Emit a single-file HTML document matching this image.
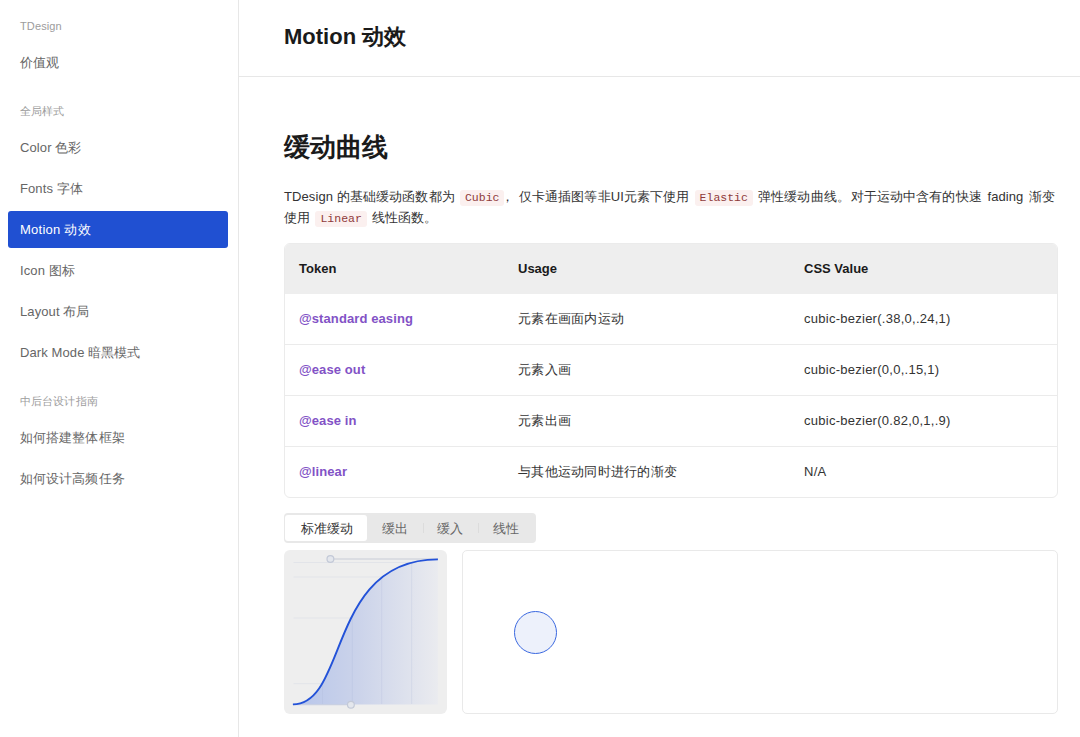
<!DOCTYPE html>
<html>
<head>
<meta charset="utf-8">
<style>
*{box-sizing:border-box;margin:0;padding:0}
html,body{width:1080px;height:737px;overflow:hidden;background:#fff}
body{font-family:"Liberation Sans",sans-serif;color:#222;position:relative}
.abs{position:absolute;white-space:nowrap}
#side{position:absolute;left:0;top:0;width:239px;height:737px;border-right:1px solid #e7e7e7}
.gt{position:absolute;left:20px;font-size:11px;color:#9c9c9c;line-height:14px;letter-spacing:0.12px}
.it{position:absolute;left:20px;font-size:13px;color:#666;line-height:16px;letter-spacing:0.1px}
.act{position:absolute;left:8px;top:211px;width:220px;height:37px;background:#2050d2;border-radius:3px}
.act span{position:absolute;left:12px;top:11px;font-size:13px;color:#fff;line-height:16px;letter-spacing:0.25px}
#hdr{position:absolute;left:239px;top:0;width:841px;height:77px;border-bottom:1px solid #e7e7e7}
#hdr .t{position:absolute;left:45px;top:24px;font-size:22px;font-weight:bold;color:#1a1a1a;line-height:26px}
h2{position:absolute;left:284px;top:132px;font-size:26px;font-weight:bold;color:#1a1a1a;line-height:30px}
.p{position:absolute;left:284px;font-size:13px;color:#333;line-height:16px;white-space:nowrap;letter-spacing:0.1px}
code{font-family:"Liberation Mono",monospace;font-size:11.5px;color:#8f3a3a;background:#fbf0ef;border-radius:3px;padding:1px 5px 2px;margin:0 1.5px;letter-spacing:0}
#tbl{position:absolute;left:284px;top:243px;width:774px;height:255px;border:1px solid #ebebeb;border-radius:6px;overflow:hidden}
.th{position:absolute;left:0;top:0;width:100%;height:50px;background:#eee}
.row{position:absolute;left:0;width:100%;height:51px;border-top:1px solid #ebebeb}
.c{position:absolute;font-size:13px;line-height:16px;white-space:nowrap}
.hd{font-weight:bold;color:#1a1a1a}
.tk{font-weight:bold;color:#8252c6;letter-spacing:0.1px}
.us{color:#333;letter-spacing:0.26px}
#tabs{position:absolute;left:284px;top:513px;width:252px;height:30px;background:#e8e8e8;border-radius:4px}
.tab{position:absolute;top:9px;font-size:13px;color:#666;line-height:14px}
.tabact{position:absolute;left:1px;top:2px;width:82px;height:26px;background:#fff;border-radius:3px}
.sep{position:absolute;top:10px;width:1px;height:10px;background:#dcdcdc}
#curve{position:absolute;left:284px;top:550px;width:163px;height:164px;background:#eee;border-radius:6px}
#anim{position:absolute;left:462px;top:550px;width:596px;height:164px;border:1px solid #e9e9e9;border-radius:5px}
</style>
</head>
<body>
<div id="side">
  <div class="gt" style="top:19px">TDesign</div>
  <div class="it" style="top:55px">价值观</div>
  <div class="gt" style="top:104px">全局样式</div>
  <div class="it" style="top:140px">Color 色彩</div>
  <div class="it" style="top:181px">Fonts 字体</div>
  <div class="act"><span>Motion 动效</span></div>
  <div class="it" style="top:263px">Icon 图标</div>
  <div class="it" style="top:304px">Layout 布局</div>
  <div class="it" style="top:345px">Dark Mode 暗黑模式</div>
  <div class="gt" style="top:394px">中后台设计指南</div>
  <div class="it" style="top:430px">如何搭建整体框架</div>
  <div class="it" style="top:471px">如何设计高频任务</div>
</div>
<div id="hdr"><div class="t">Motion 动效</div></div>
<h2>缓动曲线</h2>
<div class="p" style="top:189px">TDesign 的基础缓动函数都为 <code>Cubic</code><span style="display:inline-block;width:13px;text-indent:-5px;letter-spacing:0">，</span>仅卡通插图等非UI元素下使用 <code>Elastic</code> 弹性缓动曲线<span style="display:inline-block;width:14px;letter-spacing:0">。</span>对于运动中含有的快速<span style="word-spacing:2px"> fading </span>渐变</div>
<div class="p" style="top:210px">使用 <code>Linear</code> 线性函数。</div>

<div id="tbl">
  <div class="th">
    <div class="c hd" style="left:14px;top:17px">Token</div>
    <div class="c hd" style="left:233px;top:17px">Usage</div>
    <div class="c hd" style="left:519px;top:17px">CSS Value</div>
  </div>
  <div class="row" style="top:49px;border-top-color:transparent">
    <div class="c tk" style="left:14px;top:17px">@standard easing</div>
    <div class="c us" style="left:233px;top:17px">元素在画面内运动</div>
    <div class="c us" style="left:519px;top:17px">cubic-bezier(.38,0,.24,1)</div>
  </div>
  <div class="row" style="top:100px">
    <div class="c tk" style="left:14px;top:17px">@ease out</div>
    <div class="c us" style="left:233px;top:17px">元素入画</div>
    <div class="c us" style="left:519px;top:17px">cubic-bezier(0,0,.15,1)</div>
  </div>
  <div class="row" style="top:151px">
    <div class="c tk" style="left:14px;top:17px">@ease in</div>
    <div class="c us" style="left:233px;top:17px">元素出画</div>
    <div class="c us" style="left:519px;top:17px">cubic-bezier(0.82,0,1,.9)</div>
  </div>
  <div class="row" style="top:202px">
    <div class="c tk" style="left:14px;top:17px">@linear</div>
    <div class="c us" style="left:233px;top:17px">与其他运动同时进行的渐变</div>
    <div class="c us" style="left:519px;top:17px">N/A</div>
  </div>
</div>

<div id="tabs">
  <div class="tabact"></div>
  <div class="tab" style="left:17px;color:#333">标准缓动</div>
  <div class="tab" style="left:98px">缓出</div>
  <div class="sep" style="left:139px"></div>
  <div class="tab" style="left:153px">缓入</div>
  <div class="sep" style="left:194px"></div>
  <div class="tab" style="left:209px">线性</div>
</div>

<div id="curve"><svg width="163" height="164" viewBox="0 0 163 164" style="position:absolute;left:0;top:0">
<defs><linearGradient id="fg" x1="0" y1="0" x2="1" y2="0">
<stop offset="0" stop-color="#b7c5ea"/><stop offset="0.45" stop-color="#cbd3ea"/><stop offset="1" stop-color="#eaebef"/></linearGradient><clipPath id="fc"><path d="M8.9,154.4 C64,154.4 43.7,9.4 153.9,9.4 L153.9,154.4 Z"/></clipPath></defs>
<g stroke="#e2e4e9" stroke-width="1" fill="none">
<line x1="9.5" y1="12.5" x2="154" y2="12.5"/>
<line x1="9.5" y1="27" x2="154" y2="27"/>
<line x1="9.5" y1="68" x2="154" y2="68"/>
<line x1="9.5" y1="133.7" x2="154" y2="133.7"/>
</g>
<path d="M8.9,154.4 C64,154.4 43.7,9.4 153.9,9.4 L153.9,154.4 Z" fill="url(#fg)"/>
<g stroke="#aab6d6" stroke-width="1" fill="none" opacity="0.25" clip-path="url(#fc)">
<line x1="38.5" y1="0" x2="38.5" y2="154"/>
<line x1="68.3" y1="0" x2="68.3" y2="154"/>
<line x1="97.7" y1="0" x2="97.7" y2="154"/>
<line x1="127.7" y1="0" x2="127.7" y2="154"/>
</g>
<line x1="50" y1="9" x2="153.9" y2="9" stroke="#d4d7de" stroke-width="1.5"/>
<line x1="8.9" y1="154.6" x2="63" y2="154.6" stroke="#c9d0e2" stroke-width="1.2"/>
<path d="M8.9,154.4 C64,154.4 43.7,9.4 153.9,9.4" fill="none" stroke="#2352d8" stroke-width="1.9"/>
<circle cx="46.4" cy="9" r="3.4" fill="#e4e7ed" stroke="#c3c9d7" stroke-width="1.2"/>
<circle cx="66.9" cy="154.8" r="3.4" fill="#e4e7ed" stroke="#c3c9d7" stroke-width="1.2"/>
</svg></div>
<div id="anim"><div style="position:absolute;left:51px;top:60px;width:43px;height:43px;border-radius:50%;border:1.3px solid #3a68e0;background:#edf1fb"></div></div>
</body>
</html>
